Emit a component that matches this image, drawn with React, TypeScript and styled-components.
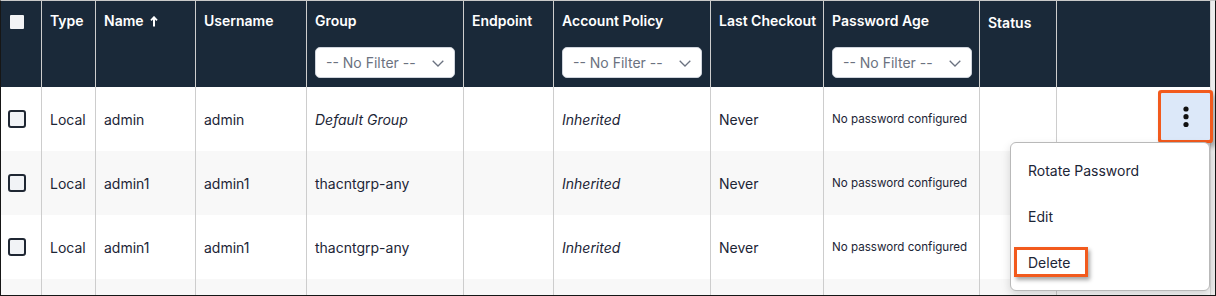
import React from 'react';
import styled, {createGlobalStyle} from 'styled-components';

const navy = '#1a2939';
const ink = '#1c2536';
const rule = '#cdcdcd';
const annotate = '#f25a1d';

const columns = '41px 54px 100px 111px 157px 90px 157px 113px 156px 77px 153px';

const GlobalStyle = createGlobalStyle`
  html, body {
    margin: 0;
    padding: 0;
    background: #fff;
  }
  body {
    font-family: Inter, "Noto Sans", "Liberation Sans", sans-serif;
    color: ${ink};
  }
`;

const Frame = styled.div`
  box-sizing: border-box;
  width: 1216px;
  height: 296px;
  border: 1px solid #161616;
  border-top-color: #c9c9c9;
  display: flex;
  overflow: hidden;
  background: #fff;
`;

const Table = styled.div`
  width: 1209px;
  display: flex;
  flex-direction: column;
`;

const ScrollTrack = styled.div`
  flex: 1;
  background: #ececec;
  border-left: 1px solid #d6d6d6;
`;

const HeaderRow = styled.div`
  display: grid;
  grid-template-columns: ${columns};
  height: 86px;
  background: ${navy};
  flex-shrink: 0;
`;

const Row = styled.div<{$striped?: boolean}>`
  display: grid;
  grid-template-columns: ${columns};
  height: 64px;
  flex-shrink: 0;
  background: ${({$striped}) => ($striped ? '#f8f8f8' : '#fff')};
`;

const HeadCell = styled.div<{$low?: boolean}>`
  box-sizing: border-box;
  padding: ${({$low}) => ($low ? '13px' : '11px')} 8px 0;
  border-right: 1px solid ${rule};
  color: #fff;
  font-weight: 600;
  font-size: 14px;
  line-height: 18px;
  white-space: nowrap;
  display: flex;
  flex-direction: column;
  &:last-child {
    border-right: none;
  }
`;

const HeadTitle = styled.span`
  display: flex;
  align-items: center;
  gap: 6px;
`;

const HeadCheck = styled.span`
  display: block;
  width: 14px;
  height: 14px;
  margin: 3px 0 0 1px;
  background: #f2f3f5;
  border-radius: 1px;
`;

const Filter = styled.div`
  box-sizing: border-box;
  margin-top: 17px;
  width: 140px;
  height: 31px;
  padding: 1px 10px 0 10px;
  display: flex;
  align-items: center;
  justify-content: space-between;
  background: #fff;
  border: 1px solid #cfd4dc;
  border-radius: 5px;
  color: #6b7280;
  font-weight: 400;
  font-size: 14px;
`;

const Cell = styled.div<{$italic?: boolean; $small?: boolean}>`
  box-sizing: border-box;
  position: relative;
  padding: 0 8px;
  border-right: 1px solid ${rule};
  display: flex;
  align-items: center;
  font-size: ${({$small}) => ($small ? '11.6px' : '14px')};
  font-style: ${({$italic}) => ($italic ? 'italic' : 'normal')};
  white-space: nowrap;
  &:last-child {
    border-right: none;
    padding-right: 0;
    justify-content: flex-end;
  }
`;

const CheckBox = styled.span`
  box-sizing: border-box;
  display: block;
  width: 18px;
  height: 18px;
  margin-left: -1px;
  border: 2px solid #1f2733;
  border-radius: 3px;
  background: #f1f3f6;
`;

const KebabButton = styled.button`
  position: relative;
  z-index: 2;
  width: 49px;
  height: 47px;
  margin-bottom: 5px;
  padding: 0;
  border: none;
  border-radius: 1px;
  background: #dce8f9;
  display: flex;
  align-items: center;
  justify-content: center;
  box-shadow: 0 0 0 3px ${annotate}, 3px 4px 5px 3px rgba(0, 0, 0, 0.3);
`;

const Menu = styled.div`
  position: absolute;
  z-index: 3;
  top: 55px;
  right: 0;
  box-sizing: border-box;
  width: 200px;
  padding: 4px 0 5px;
  background: #fff;
  border: 1px solid #b9b9b9;
  border-radius: 6px;
  box-shadow: 0 4px 10px rgba(0, 0, 0, 0.15);
  display: flex;
  flex-direction: column;
`;

const MenuItem = styled.div`
  height: 46px;
  padding-left: 17px;
  display: flex;
  align-items: center;
  font-size: 14px;
  font-style: normal;
  color: ${ink};
`;

const Callout = styled.span`
  box-sizing: border-box;
  height: 30px;
  margin-left: -14px;
  padding: 0 15px 0 11px;
  display: inline-flex;
  align-items: center;
  border: 3px solid ${annotate};
  box-shadow: 2px 3px 4px rgba(0, 0, 0, 0.35);
`;

const SortArrow = () => (
  <svg width="8" height="11" viewBox="0 0 8 11">
    <path d="M4 10.5V1.8" stroke="#fff" strokeWidth="2" />
    <path d="M1 4.4L4 1.2L7 4.4" stroke="#fff" strokeWidth="1.8" fill="none" />
  </svg>
);

const Chevron = () => (
  <svg width="12" height="7" viewBox="0 0 12 7">
    <path d="M0.7 0.8L6 6L11.3 0.8" stroke="#6b7280" strokeWidth="1.3" fill="none" />
  </svg>
);

const Dots = () => (
  <svg width="6" height="22" viewBox="0 0 6 22">
    <circle cx="3" cy="3" r="2.6" fill="#111" />
    <circle cx="3" cy="10.7" r="2.6" fill="#111" />
    <circle cx="3" cy="18.5" r="2.6" fill="#111" />
  </svg>
);

const FilterSelect = () => (
  <Filter>
    <span>-- No Filter --</span>
    <Chevron />
  </Filter>
);

interface Account {
  name: string;
  group: string;
  defaultGroup?: boolean;
}

const accounts: Account[] = [
  {name: 'admin', group: 'Default Group', defaultGroup: true},
  {name: 'admin1', group: 'thacntgrp-any'},
  {name: 'admin1', group: 'thacntgrp-any'},
];

export default function App() {
  return (
    <>
      <GlobalStyle />
      <Frame>
        <Table>
          <HeaderRow>
            <HeadCell>
              <HeadCheck />
            </HeadCell>
            <HeadCell>Type</HeadCell>
            <HeadCell>
              <HeadTitle>
                Name <SortArrow />
              </HeadTitle>
            </HeadCell>
            <HeadCell>Username</HeadCell>
            <HeadCell>
              Group
              <FilterSelect />
            </HeadCell>
            <HeadCell>Endpoint</HeadCell>
            <HeadCell>
              Account Policy
              <FilterSelect />
            </HeadCell>
            <HeadCell>Last Checkout</HeadCell>
            <HeadCell>
              Password Age
              <FilterSelect />
            </HeadCell>
            <HeadCell $low>Status</HeadCell>
            <HeadCell />
          </HeaderRow>

          {accounts.map((acc, i) => (
            <Row key={i} $striped={i % 2 === 1}>
              <Cell>
                <CheckBox />
              </Cell>
              <Cell>Local</Cell>
              <Cell>{acc.name}</Cell>
              <Cell>{acc.name}</Cell>
              <Cell $italic={acc.defaultGroup}>{acc.group}</Cell>
              <Cell />
              <Cell $italic>Inherited</Cell>
              <Cell>Never</Cell>
              <Cell $small>No password configured</Cell>
              <Cell />
              <Cell>
                {i === 0 && (
                  <>
                    <KebabButton aria-label="Actions">
                      <Dots />
                    </KebabButton>
                    <Menu>
                      <MenuItem>Rotate Password</MenuItem>
                      <MenuItem>Edit</MenuItem>
                      <MenuItem>
                        <Callout>Delete</Callout>
                      </MenuItem>
                    </Menu>
                  </>
                )}
              </Cell>
            </Row>
          ))}

          <Row $striped>
            {Array.from({length: 11}).map((_, i) => (
              <Cell key={i} />
            ))}
          </Row>
        </Table>
        <ScrollTrack />
      </Frame>
    </>
  );
}
